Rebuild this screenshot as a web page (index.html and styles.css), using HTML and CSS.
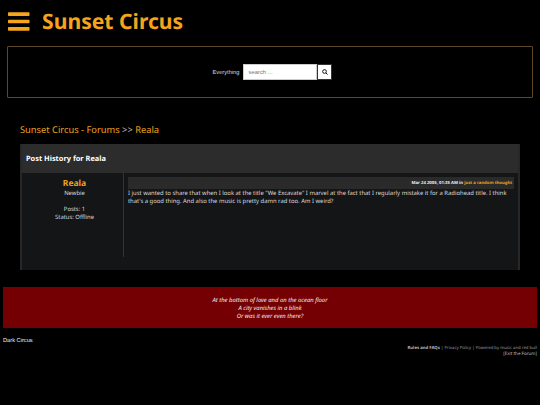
FILE: index.html
```
<!DOCTYPE html>
<html lang="en">
<head>
  <meta charset="UTF-8">
  <meta name="viewport" content="width=device-width, initial-scale=1.0">
  <title>Post History for Reala</title>
  <link rel="stylesheet" href="styles.css">
</head>
<body>
  <header class="site-header">
    <svg class="menu-icon" viewBox="0 0 22 19" width="22" height="19">
      <rect x="0" y="0.3" width="21.5" height="3.6" rx="0.7"/>
      <rect x="0" y="7.7" width="21.5" height="3.6" rx="0.7"/>
      <rect x="0" y="15.1" width="21.5" height="3.6" rx="0.7"/>
    </svg>
    <h1>Sunset Circus</h1>
  </header>

  <form class="search-box">
    <label for="search">Everything</label>
    <input id="search" type="text" placeholder="search ...">
    <button type="button" aria-label="Search">
      <svg viewBox="0 0 12 12" width="6" height="6">
        <circle cx="5" cy="5" r="3.7"/>
        <path d="M8 8l3 3"/>
      </svg>
    </button>
  </form>

  <main>
    <nav class="breadcrumb"><a href="#">Sunset Circus - Forums</a> &gt;&gt; <a href="#">Reala</a></nav>

    <section class="history">
      <h2>Post History for Reala</h2>
      <div class="post">
        <div class="member">
          <a class="member-name" href="#">Reala</a>
          <div>Newbie</div>
          <div class="member-stats">Posts: 1<br>Status: Offline</div>
        </div>
        <div class="message">
          <div class="post-info">Mar 24 2005, 01:35 AM in <a href="#">just a random thought</a></div>
          <p>I just wanted to share that when I look at the title "We Excavate" I marvel at the fact that I regularly mistake it for a Radiohead title. I think<br>that's a good thing. And also the music is pretty damn rad too. Am I weird?</p>
        </div>
      </div>
    </section>
  </main>

  <div class="lyrics">
    <span>At the bottom of love and on the ocean floor</span>
    <span>A city vanishes in a blink</span>
    <span>Or was it ever even there?</span>
  </div>

  <footer>
    <div class="skin">Dark Circus</div>
    <div class="footer-links">
      <div><b>Rules and FAQs</b> | Privacy Policy | Powered by music and red bull</div>
      <div class="exit">[Exit the Forum]</div>
    </div>
  </footer>
</body>
</html>
```
FILE: styles.css
```
* {
  box-sizing: border-box;
}
body {
  margin: 0;
  background: #000;
  color: #ddd;
  font-family: "Noto Sans", sans-serif;
  font-size: 5.89px;
  line-height: 8px;
  text-rendering: geometricPrecision;
}
a {
  color: #f0a01e;
  text-decoration: none;
}

/* header */
.site-header {
  display: flex;
  align-items: center;
  gap: 12px;
  height: 42px;
  padding-left: 8px;
}
.menu-icon {
  fill: #f5a51b;
}
h1 {
  margin: 0;
  color: #f5a51b;
  font-size: 21.15px;
  line-height: 30px;
  padding-top: 2px;
}
.search-box {
  display: flex;
  align-items: center;
  justify-content: center;
  height: 52px;
  margin: 4px 7px 0;
  padding-left: 5px;
  border: 1px solid #5f4727;
  border-radius: 1px;
}
.search-box label {
  margin-right: 4px;
  padding-top: 1px;
  font-family: "Liberation Sans", Arial, sans-serif;
  font-size: 5.7px;
}
.search-box input {
  width: 74px;
  height: 16px;
  padding: 0 4px;
  border: 1px solid #ccc;
  border-radius: 0;
  background: #fff;
  font-family: "Liberation Sans", Arial, sans-serif;
  font-size: 5.9px;
}
.search-box input::placeholder {
  color: #777;
}
.search-box button {
  display: flex;
  align-items: center;
  justify-content: center;
  width: 15px;
  height: 16px;
  padding: 0;
  border: 1px solid #333;
  background: #fff;
}
.search-box button svg {
  fill: none;
  stroke: #111;
  stroke-width: 2;
}

/* posts */
main {
  padding: 25px 20px 0;
}
.breadcrumb {
  height: 21px;
  color: #bbb;
  font-size: 9.3px;
  line-height: 14px;
}
.history {
  height: 126px;
  border: solid #272727;
  border-width: 0 2px;
  background: #141517;
}
h2 {
  height: 29px;
  margin: 0;
  padding-left: 4px;
  background: #2c2c2c;
  color: #fff;
  font-size: 7.4px;
  line-height: 31px;
}
.post {
  display: flex;
  height: 84px;
}
.member {
  width: 102px;
  padding-top: 5px;
  padding-left: 4px;
  border-right: 1px solid #333;
  text-align: center;
}
.member-name {
  display: block;
  font-size: 8.5px;
  font-weight: bold;
  line-height: 11px;
}
.member-stats {
  margin-top: 8px;
}
.message {
  flex: 1;
  padding: 4px 4px 0;
}
.post-info {
  height: 12px;
  padding-right: 2px;
  background: #2a2a2a;
  color: #eee;
  font-size: 4.25px;
  font-weight: bold;
  line-height: 13px;
  text-align: right;
}
.message p {
  margin: 0;
  white-space: nowrap;
}

.lyrics {
  display: flex;
  flex-direction: column;
  height: 41px;
  margin: 17px 3px 0;
  padding-top: 9px;
  background: #750004;
  color: #eee;
  font-style: italic;
  text-align: center;
}

/* footer */
footer {
  padding: 9px 3px 0;
}
.skin {
  color: #eee;
  font-family: "Liberation Sans", Arial, sans-serif;
  font-size: 5.7px;
}
.footer-links {
  color: #999;
  font-size: 4.25px;
  line-height: 6px;
  text-align: right;
}
.footer-links b,
.exit {
  color: #bbb;
}
.exit {
  font-size: 4.5px;
}
```
